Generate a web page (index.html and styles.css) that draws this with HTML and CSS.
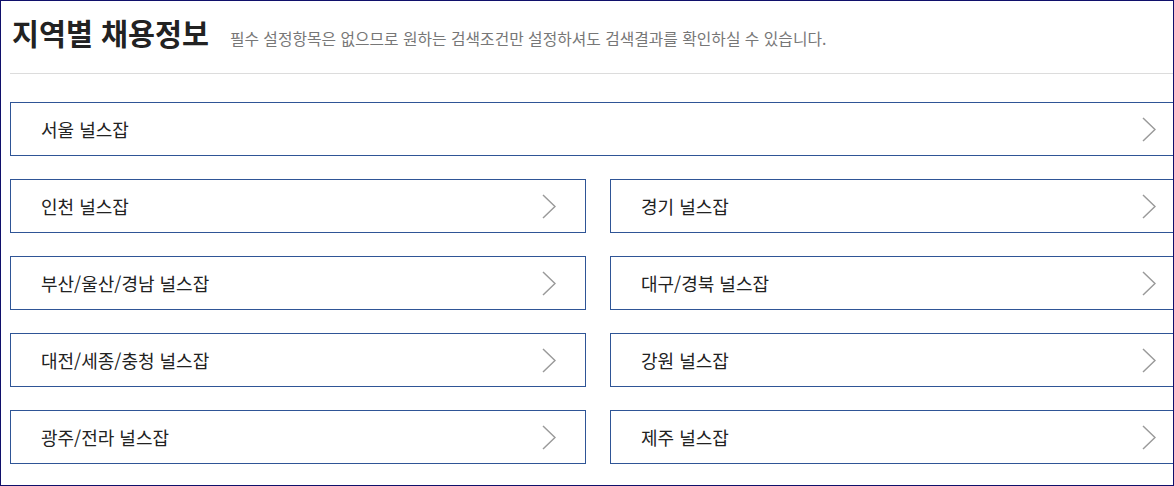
FILE: index.html
```html
<!DOCTYPE html>
<html lang="ko">
<head>
    <meta charset="UTF-8">
    <meta name="viewport" content="width=device-width, initial-scale=1.0">
    <title>지역별 채용정보</title>
    <link rel="stylesheet" href="styles.css">
</head>
<body>
    <div class="frame">
        <div class="page">
            <div class="head">
                <h1>지역별 채용정보</h1>
                <p class="desc">필수 설정항목은 없으므로 원하는 검색조건만 설정하셔도 검색결과를 확인하실 수 있습니다.</p>
            </div>
            <div class="region-list">
                <a class="region wide" href="#"><span>서울 널스잡</span>
                    <svg class="arrow" width="14" height="25" viewBox="0 0 14 25"><polyline points="1,1 13,12.5 1,24"/></svg></a>
                <a class="region" href="#"><span>인천 널스잡</span>
                    <svg class="arrow" width="14" height="25" viewBox="0 0 14 25"><polyline points="1,1 13,12.5 1,24"/></svg></a>
                <a class="region" href="#"><span>경기 널스잡</span>
                    <svg class="arrow" width="14" height="25" viewBox="0 0 14 25"><polyline points="1,1 13,12.5 1,24"/></svg></a>
                <a class="region" href="#"><span>부산/울산/경남 널스잡</span>
                    <svg class="arrow" width="14" height="25" viewBox="0 0 14 25"><polyline points="1,1 13,12.5 1,24"/></svg></a>
                <a class="region" href="#"><span>대구/경북 널스잡</span>
                    <svg class="arrow" width="14" height="25" viewBox="0 0 14 25"><polyline points="1,1 13,12.5 1,24"/></svg></a>
                <a class="region" href="#"><span>대전/세종/충청 널스잡</span>
                    <svg class="arrow" width="14" height="25" viewBox="0 0 14 25"><polyline points="1,1 13,12.5 1,24"/></svg></a>
                <a class="region" href="#"><span>강원 널스잡</span>
                    <svg class="arrow" width="14" height="25" viewBox="0 0 14 25"><polyline points="1,1 13,12.5 1,24"/></svg></a>
                <a class="region" href="#"><span>광주/전라 널스잡</span>
                    <svg class="arrow" width="14" height="25" viewBox="0 0 14 25"><polyline points="1,1 13,12.5 1,24"/></svg></a>
                <a class="region" href="#"><span>제주 널스잡</span>
                    <svg class="arrow" width="14" height="25" viewBox="0 0 14 25"><polyline points="1,1 13,12.5 1,24"/></svg></a>
            </div>
        </div>
    </div>
</body>
</html>
```

FILE: styles.css
```css
body {
    margin: 0;
    font-family: "Noto Sans CJK KR", "Noto Sans", sans-serif;
    background: #fff;
}
.frame {
    width: 1174px;
    height: 486px;
    box-sizing: border-box;
    border: 1px solid #10106b;
    overflow: hidden;
}
.page {
    width: 1176px;
    padding-left: 9px;
}
.head {
    display: flex;
    align-items: baseline;
    height: 73px;
    box-sizing: border-box;
    padding-top: 10px;
    border-bottom: 1px solid #dcdcdc;
}
.head h1 {
    margin: 0 0 0 2px;
    font-size: 29.3px;
    line-height: 42px;
    font-weight: 700;
    color: #222;
}
.desc {
    margin: 0 0 0 21px;
    font-size: 15.8px;
    color: #777;
}
.region-list {
    display: grid;
    grid-template-columns: 1fr 1fr;
    column-gap: 24px;
    row-gap: 23px;
    margin-top: 28px;
}
.region {
    display: flex;
    align-items: center;
    justify-content: space-between;
    height: 54px;
    box-sizing: border-box;
    padding: 0 29px 0 30px;
    border: 1px solid #2f5596;
    color: #222;
    font-size: 18px;
    text-decoration: none;
}
.region.wide {
    grid-column: 1 / 3;
}
.arrow polyline {
    fill: none;
    stroke: #9a9a9a;
    stroke-width: 1.5;
}
```
